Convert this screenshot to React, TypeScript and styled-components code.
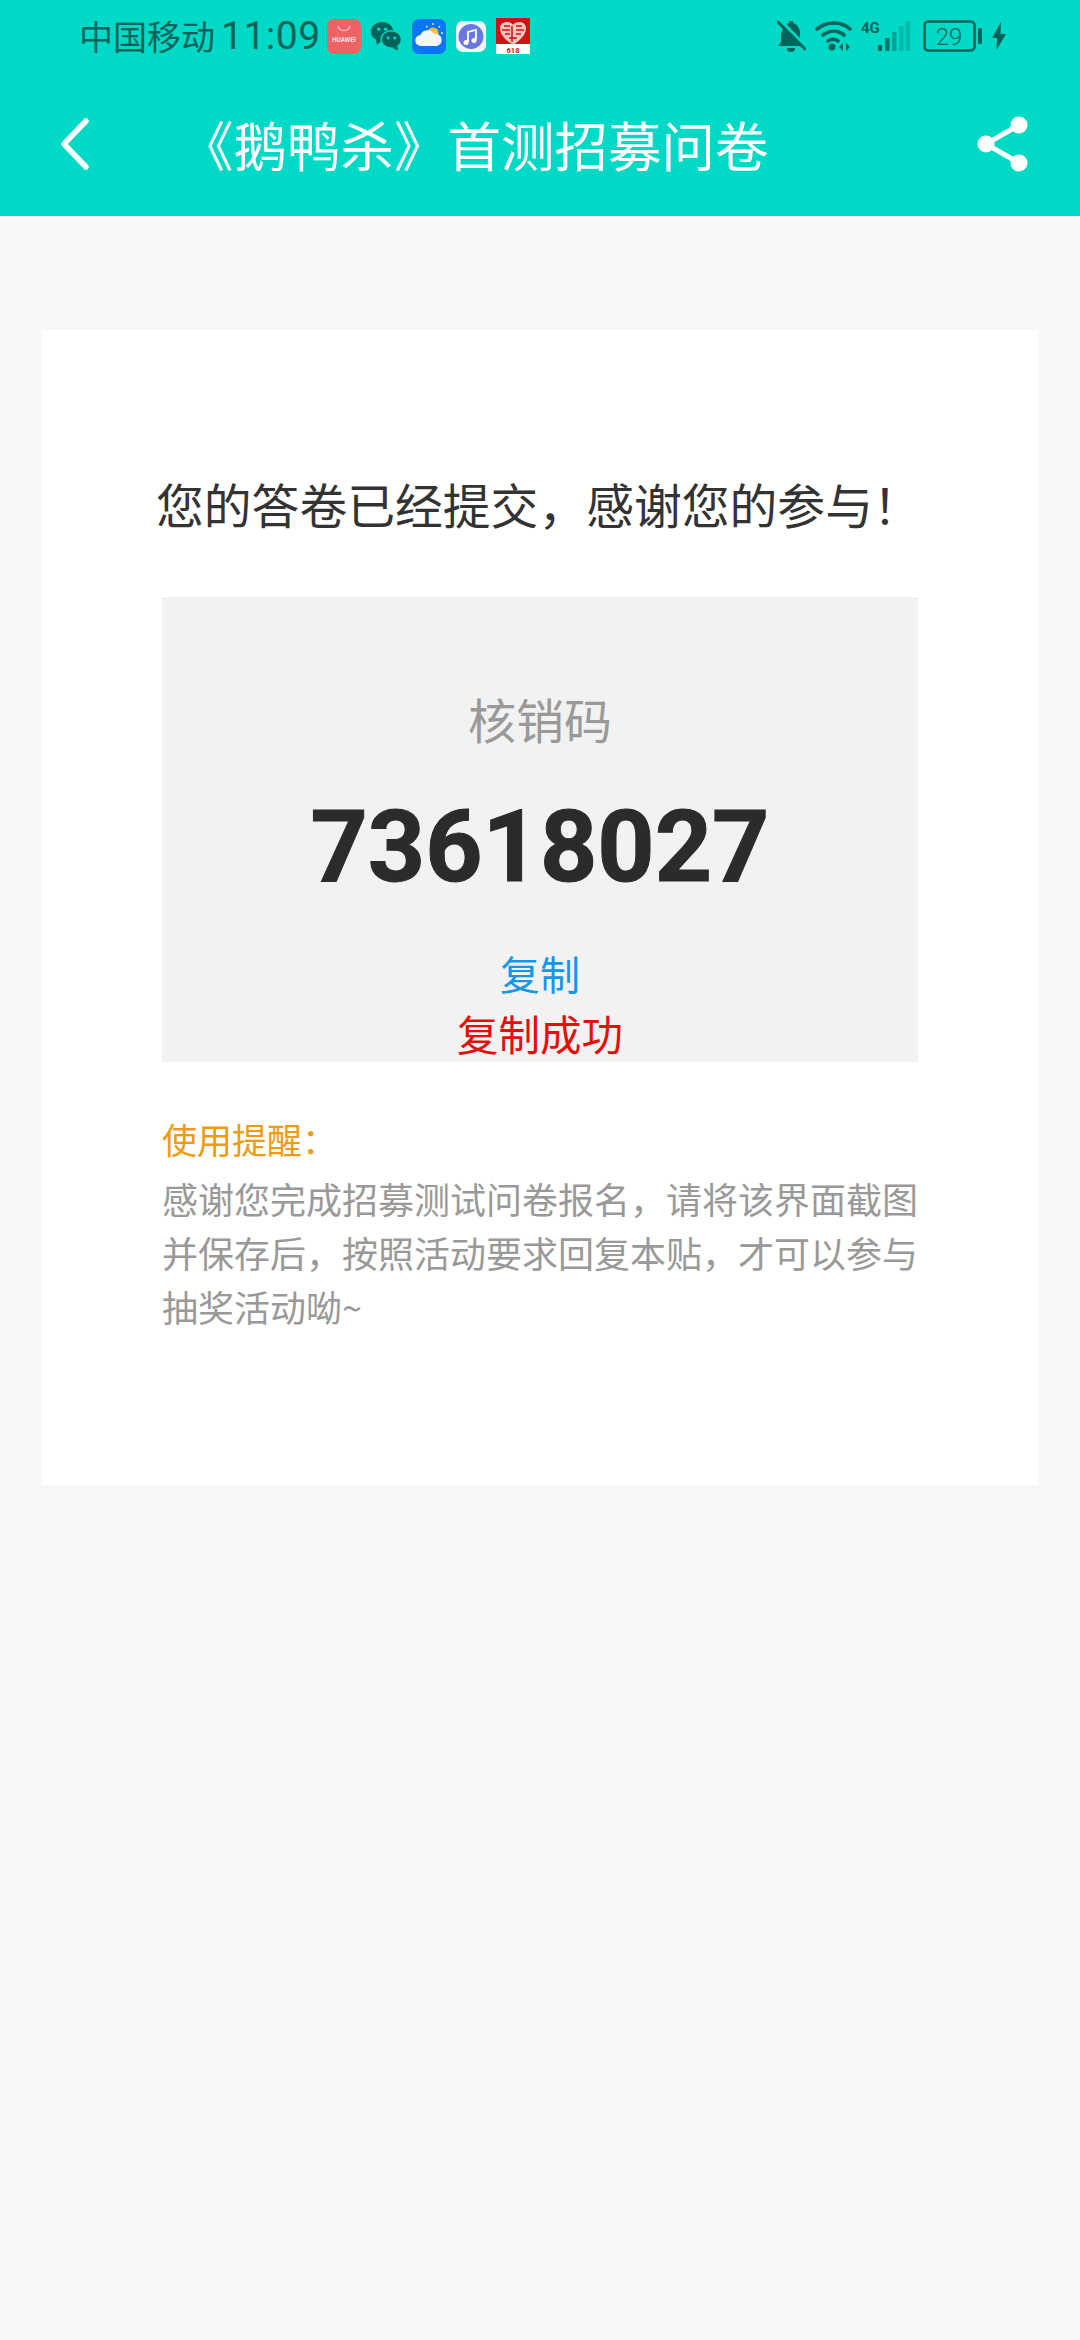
import React from "react";
import styled, { createGlobalStyle } from "styled-components";

const Global = createGlobalStyle`
  html, body { margin: 0; padding: 0; background: #f7f7f7; }
  body { font-family: "Roboto", "Noto Sans CJK SC", sans-serif; }
`;
const Page = styled.div`
  width: 1080px; height: 2340px; background: #f7f7f7; overflow: hidden;
  display: flex; flex-direction: column;
`;
const Header = styled.header`
  height: 216px; background: #00d9c6; display: flex; flex-direction: column; flex: none;
`;
const StatusBar = styled.div`
  height: 72px; display: flex; align-items: center; padding: 0 0 0 79px; color: #00635a;
`;
const Carrier = styled.span`
  font-size: 34px; line-height: 72px; width: 136px; white-space: nowrap;
  font-family: "Noto Sans CJK SC", sans-serif;
`;
const Clock = styled.span`
  font-size: 39px; line-height: 72px; width: 106px; margin-left: 6px; letter-spacing: 0.5px; white-space: nowrap;
  font-family: "Roboto", sans-serif;
`;
const Notifs = styled.div`
  display: flex; align-items: center; gap: 10px; height: 36px;
`;
const Spacer = styled.div` flex: 1; `;
const SysIcons = styled.div`
  display: flex; align-items: center; padding-right: 74px; height: 36px;
`;
const SysSlot = styled.span<{ $gap: number }>`
  display: flex; margin-right: ${(p) => p.$gap}px;
`;
const NavBar = styled.div`
  flex: 1; display: flex; align-items: center; padding: 0 51px 0 60px; color: #fff;
`;
const Title = styled.h1`
  margin: 0 0 0 90px; flex: 1; font-weight: 400; font-size: 53.5px; line-height: 72px; white-space: nowrap;
  font-family: "Noto Sans CJK SC", sans-serif;
`;
const Card = styled.section`
  margin: 114px 42px 0; height: 1155px; box-sizing: border-box; background: #fff;
  padding: 144px 120px 0;
  display: flex; flex-direction: column;
`;
const Heading = styled.h2`
  margin: 0 0 0 -6px; font-weight: 400; font-size: 47.8px; line-height: 60px; color: #333; white-space: nowrap;
  font-family: "Noto Sans CJK SC", sans-serif;
`;
const CodeBox = styled.div`
  margin-top: 63px; height: 465px; background: #f2f2f2; display: flex; flex-direction: column; align-items: center;
`;
const CodeLabel = styled.div`
  margin-top: 89px; font-size: 48px; line-height: 65px; color: #999;
  font-family: "Noto Sans CJK SC", sans-serif;
`;
const CodeValue = styled.div`
  margin-top: 35px; font-size: 100px; line-height: 122px; font-weight: 700; color: #2b2b2b;
  font-family: "Roboto", sans-serif; -webkit-text-stroke: 1px #2b2b2b;
`;
const CopyLink = styled.div<{ $tone: string; $size: number; $gap: number }>`
  margin-top: ${(p) => p.$gap}px; font-size: ${(p) => p.$size}px; line-height: 57px; color: ${(p) => p.$tone};
  font-family: "Noto Sans CJK SC", sans-serif;
`;
const Reminder = styled.div`
  margin-top: 50px; font-size: 36px; line-height: 54px; color: #999; font-family: "Noto Sans CJK SC", sans-serif;
`;
const ReminderTitle = styled.div` color: #f09a12; font-size: 35px; margin-bottom: 5px; `;
const ReminderBody = styled.p` margin: 0; width: 760px; `;

const Huawei = () => (
  <svg width="34" height="35" viewBox="0 0 34 35">
    <rect width="34" height="35" rx="7" fill="#ee6262" />
    <path d="M11 7c1 6 11 6 12 0" stroke="#fbd" strokeWidth="1.4" fill="none" />
    <text x="17" y="23" fontSize="6.4" fontWeight="700" fill="#fde" textAnchor="middle" fontFamily="Roboto">HUAWEI</text>
  </svg>
);
const Wechat = () => (
  <svg width="31" height="30" viewBox="0 0 32 30" fill="#00635a">
    <ellipse cx="11.5" cy="10.5" rx="11.5" ry="10" />
    <path d="M5 17l1 7 6-5z" />
    <ellipse cx="21" cy="18.5" rx="10.5" ry="9" stroke="#00d9c6" strokeWidth="1.5" />
    <path d="M27 25l1 5-6-3z" />
    <circle cx="8" cy="8" r="1.7" fill="#00d9c6" /><circle cx="15" cy="8" r="1.7" fill="#00d9c6" />
    <circle cx="17.5" cy="17" r="1.5" fill="#00d9c6" /><circle cx="24.5" cy="17" r="1.5" fill="#00d9c6" />
  </svg>
);
const Weather = () => (
  <svg width="34" height="35" viewBox="0 0 34 35">
    <rect width="34" height="35" rx="7" fill="#0a76f4" />
    <circle cx="21" cy="14" r="5.5" fill="#f9c23c" />
    <path d="M21 4v2M28 7l-1.5 1.5M31 14h-2M14 7l1.5 1.5" stroke="#f9e6a0" strokeWidth="1.3" />
    <path d="M9 27a5.5 5.5 0 0 1-.5-11 7.5 7.5 0 0 1 13.5-1 6 6 0 0 1 3 12z" fill="#f4f7fa" />
  </svg>
);
const Music = () => (
  <svg width="30" height="31" viewBox="0 0 30 31">
    <rect width="30" height="31" rx="7" fill="#f3f5ff" />
    <circle cx="15" cy="15.5" r="12.5" fill="#6a78dc" />
    <path d="M12 21V11l8-2v10" stroke="#fff" strokeWidth="1.8" fill="none" />
    <circle cx="10" cy="21.5" r="2.5" fill="#fff" /><circle cx="18" cy="19.5" r="2.5" fill="#fff" />
  </svg>
);
const Sale = () => (
  <svg width="34" height="36" viewBox="0 0 34 36">
    <rect width="34" height="36" fill="#fff" />
    <path d="M0 0h34v26H0z" fill="#cf1212" />
    <path d="M17 27C8 21 4 16 4 10c0-7 10-8 13-3 3-5 13-4 13 3 0 6-4 11-13 17z" fill="#f4c4bd" />
    <path d="M8 8h6M20 8h6M6 12h8M20 12h8M9 16h5M20 16h5M13 20h8M16 8v16" stroke="#cf1212" strokeWidth="1.5" />
    <text x="17" y="34.5" fontSize="7.5" fontWeight="700" fill="#c41414" textAnchor="middle" fontFamily="Roboto">618</text>
  </svg>
);
const Bell = () => (
  <svg width="29" height="32" viewBox="0 0 29 32" fill="#00635a">
    <path d="M1 26h25l-3-4v-9c0-5-3-9-7-10V1h-4v2a8 8 0 0 0-5 3L4 14v8z" />
    <path d="M10 28h8a4 4 0 0 1-8 0z" />
    <path d="M3 1l26 27" stroke="#00d9c6" strokeWidth="5" />
    <path d="M1 2l27 27" stroke="#00635a" strokeWidth="3" strokeLinecap="round" />
  </svg>
);
const Wifi = () => (
  <svg width="37" height="32" viewBox="0 0 37 32" fill="none">
    <path d="M2 9c10-8 24-8 33 0" stroke="#00635a" strokeWidth="3.6" strokeLinecap="round" />
    <path d="M8 15c7-5 15-5 21 0" stroke="#00635a" strokeWidth="3.6" strokeLinecap="round" />
    <path d="M13 21c3-2 7-2 10 0" stroke="#00635a" strokeWidth="3.4" strokeLinecap="round" />
    <circle cx="17" cy="27" r="3.4" fill="#00635a" />
    <path d="M28 23l-4 4 4 4zM31 23l4 4-4 4z" fill="#00635a" />
  </svg>
);
const Signal = () => (
  <svg width="49" height="32" viewBox="0 0 49 32" style={{ overflow: "visible" }}>
    <text x="0" y="13" fontSize="15" fontWeight="700" fill="#00635a" fontFamily="Roboto">4G</text>
    <rect x="17" y="25" width="4" height="6" rx="1" fill="#00635a" />
    <rect x="24" y="18" width="4.5" height="13" fill="#00635a" opacity=".85" />
    <rect x="31" y="12" width="4.5" height="19" fill="#00635a" opacity=".45" />
    <rect x="38" y="6" width="4.5" height="25" fill="#00635a" opacity=".25" />
    <rect x="44.5" y="1" width="4.5" height="30" fill="#00635a" opacity=".25" />
  </svg>
);
const Battery = () => (
  <svg width="59" height="32" viewBox="0 0 59 32">
    <rect x="1.5" y="1.5" width="50" height="29" rx="4" fill="none" stroke="#00635a" strokeWidth="2.6" />
    <text x="26" y="25" fontSize="24" fontWeight="300" fill="#00635a" textAnchor="middle" fontFamily="Roboto">29</text>
    <rect x="55" y="8" width="4" height="16" rx="1.5" fill="#00635a" />
  </svg>
);
const Bolt = () => (
  <svg width="14" height="28" viewBox="0 0 14 28" fill="#00635a">
    <path d="M9 0L0 16h5L4.500 28 14 12H8.500z" />
  </svg>
);
const Back = () => (
  <svg width="30" height="52" viewBox="0 0 30 52" fill="none">
    <path d="M26 3L4 26l22 23" stroke="#fff" strokeWidth="5.5" strokeLinecap="round" strokeLinejoin="round" />
  </svg>
);
const Share = () => (
  <svg width="52" height="56" viewBox="0 0 52 56" fill="#fff">
    <path d="M42 9L9 28l33 19" fill="none" stroke="#fff" strokeWidth="5" />
    <circle cx="42" cy="9" r="8.500" /><circle cx="9" cy="28" r="8.500" /><circle cx="42" cy="47" r="8.500" />
  </svg>
);

export default function App() {
  return (
    <Page>
      <Global />
      <Header>
        <StatusBar>
          <Carrier>中国移动</Carrier>
          <Clock>11:09</Clock>
          <Notifs><Huawei /><Wechat /><Weather /><Music /><Sale /></Notifs>
          <Spacer />
          <SysIcons>
            <SysSlot $gap={9}><Bell /></SysSlot>
            <SysSlot $gap={9}><Wifi /></SysSlot>
            <SysSlot $gap={13}><Signal /></SysSlot>
            <SysSlot $gap={10}><Battery /></SysSlot>
            <SysSlot $gap={0}><Bolt /></SysSlot>
          </SysIcons>
        </StatusBar>
        <NavBar>
          <Back />
          <Title>《鹅鸭杀》首测招募问卷</Title>
          <Share />
        </NavBar>
      </Header>
      <Card>
        <Heading>您的答卷已经提交，感谢您的参与！</Heading>
        <CodeBox>
          <CodeLabel>核销码</CodeLabel>
          <CodeValue>73618027</CodeValue>
          <CopyLink $tone="#1296ee" $size={40} $gap={37}>复制</CopyLink>
          <CopyLink $tone="#e60d0d" $size={41.5} $gap={3}>复制成功</CopyLink>
        </CodeBox>
        <Reminder>
          <ReminderTitle>使用提醒：</ReminderTitle>
          <ReminderBody>感谢您完成招募测试问卷报名，请将该界面截图并保存后，按照活动要求回复本贴，才可以参与抽奖活动呦~</ReminderBody>
        </Reminder>
      </Card>
    </Page>
  );
}
